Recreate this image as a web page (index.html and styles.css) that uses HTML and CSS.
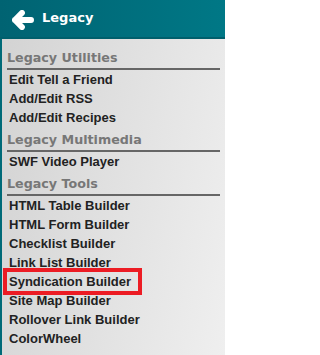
FILE: index.html
```html
<!DOCTYPE html>
<html>
<head>
<meta charset="utf-8">
<link rel="stylesheet" href="styles.css">
</head>
<body>
<div class="panel">
  <div class="header">
    <svg class="back" width="22" height="20" viewBox="0 0 22 20">
      <path d="M10 2.9 L2.9 10 L10 17.1 M2.9 10 H19.1" fill="none" stroke="#fff" stroke-width="5.8" stroke-linecap="round" stroke-linejoin="round"/>
    </svg>
    <span class="title">Legacy</span>
  </div>
  <div class="content">
    <div class="group first">
      <div class="heading">Legacy Utilities</div>
      <a class="item">Edit Tell a Friend</a>
      <a class="item">Add/Edit RSS</a>
      <a class="item">Add/Edit Recipes</a>
    </div>
    <div class="group">
      <div class="heading">Legacy Multimedia</div>
      <a class="item">SWF Video Player</a>
    </div>
    <div class="group">
      <div class="heading">Legacy Tools</div>
      <a class="item">HTML Table Builder</a>
      <a class="item">HTML Form Builder</a>
      <a class="item">Checklist Builder</a>
      <a class="item">Link List Builder</a>
      <a class="item"><span class="highlight">Syndication Builder</span></a>
      <a class="item">Site Map Builder</a>
      <a class="item">Rollover Link Builder</a>
      <a class="item">ColorWheel</a>
    </div>
  </div>
</div>
</body>
</html>
```

FILE: styles.css
```css
html, body {
  margin: 0;
  padding: 0;
}
body {
  width: 225px;
  height: 355px;
  overflow: hidden;
}
.panel {
  width: 225px;
  height: 355px;
  display: flex;
  flex-direction: column;
}
.header {
  height: 37px;
  border-bottom: 2px solid #005f6c;
  background: linear-gradient(to right, #006372, #007886);
  display: flex;
  align-items: center;
  padding-left: 12px;
  box-sizing: content-box;
}
.back {
  display: block;
  margin-top: 2px;
}
.title {
  margin-left: 8px;
  color: #fff;
  font-family: "DejaVu Sans", Verdana, sans-serif;
  font-weight: bold;
  font-size: 13px;
  margin-top: -2px;
}
.content {
  flex: 1;
  border-left: 2px solid #006a78;
  background: linear-gradient(100deg, #d3d3d3, #efefef);
  padding: 0 5px 0 5px;
}
.group.first {
  padding-top: 6px;
}
.heading {
  font-family: "DejaVu Sans", Verdana, sans-serif;
  font-weight: bold;
  font-size: 12.7px;
  color: #777;
  line-height: 19px;
  padding: 3px 0 1px 0;
  border-bottom: 2px solid #666;
}
.item {
  display: block;
  font-family: "Liberation Sans", Arial, sans-serif;
  font-weight: bold;
  font-size: 13px;
  line-height: 19px;
  color: #222;
  padding-left: 2px;
}
.item .highlight {
  display: inline-block;
  margin-left: -2px;
  padding: 0 7px 0 2px;
  outline: 4px solid #ec1c24;
}
```
